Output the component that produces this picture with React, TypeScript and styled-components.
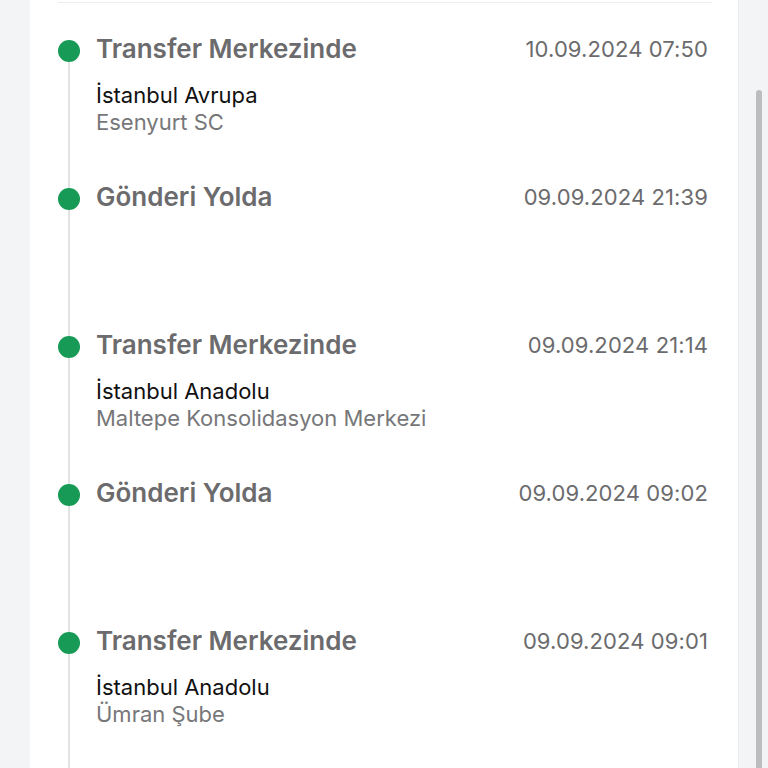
import React from "react";
import styled, { createGlobalStyle } from "styled-components";

const Global = createGlobalStyle`
  html, body { margin: 0; padding: 0; background: #f3f4f6; }
  body { font-family: Inter, "Noto Sans", "Liberation Sans", sans-serif; -webkit-font-smoothing: antialiased; }
  * { box-sizing: border-box; }
`;

const Page = styled.div`
  display: grid;
  grid-template-columns: 30px 708px 30px;
  height: 768px;
  overflow: hidden;
`;

const Gutter = styled.div`
  background: #f3f4f6;
`;

const ScrollTrack = styled.div`
  background: #f3f4f6;
  border-left: 1px solid #ececee;
  display: flex;
  flex-direction: column;
  padding: 90px 6px 0 17px;
`;

const ScrollThumb = styled.div`
  flex: 1;
  width: 6px;
  background: #bdbdbd;
  border-radius: 3px 3px 0 0;
`;

const Card = styled.div`
  background: #ffffff;
  padding: 2px 30px 0 28px;
  display: flex;
  flex-direction: column;
`;

const Divider = styled.div`
  height: 1px;
  background: #eeeeef;
  margin-right: -4px;
`;

const Timeline = styled.ul`
  list-style: none;
  margin: 0;
  padding: 0;
`;

const Item = styled.li<{ $first?: boolean }>`
  display: grid;
  grid-template-columns: 22px 1fr;
  column-gap: 16px;
  align-items: start;
  height: 148px;
  position: relative;
  padding-top: 32px;

  &:last-child {
    height: 220px;
  }

  &::before {
    content: "";
    position: absolute;
    left: 10px;
    width: 2px;
    top: ${(p) => (p.$first ? "48px" : "0")};
    bottom: 0;
    background: #e2e2e4;
  }
`;

const Dot = styled.span`
  position: relative;
  z-index: 1;
  width: 22px;
  height: 22px;
  margin-top: 5px;
  border-radius: 50%;
  background: #179a55;
`;

const Body = styled.div`
  display: flex;
  flex-direction: column;
`;

const Head = styled.div`
  display: flex;
  justify-content: space-between;
  align-items: center;
  height: 28px;
`;

const Title = styled.span`
  font-size: 26px;
  font-weight: 600;
  color: #6b6b6d;
  line-height: 28px;
`;

const Time = styled.span`
  font-size: 22px;
  font-weight: 400;
  color: #6b6b6d;
  line-height: 28px;
  letter-spacing: 0.1px;
`;

const Place = styled.div`
  margin-top: 18px;
  font-size: 22px;
  color: #111111;
  line-height: 28px;
`;

const Detail = styled.div`
  font-size: 22px;
  color: #77777a;
  line-height: 27px;
`;

type Event = { title: string; time: string; place?: string; detail?: string };

const events: Event[] = [
  { title: "Transfer Merkezinde", time: "10.09.2024 07:50", place: "İstanbul Avrupa", detail: "Esenyurt SC" },
  { title: "Gönderi Yolda", time: "09.09.2024 21:39" },
  { title: "Transfer Merkezinde", time: "09.09.2024 21:14", place: "İstanbul Anadolu", detail: "Maltepe Konsolidasyon Merkezi" },
  { title: "Gönderi Yolda", time: "09.09.2024 09:02" },
  { title: "Transfer Merkezinde", time: "09.09.2024 09:01", place: "İstanbul Anadolu", detail: "Ümran Şube" },
];

export default function App() {
  return (
    <>
      <Global />
      <Page>
        <Gutter />
        <Card>
          <Divider />
          <Timeline>
            {events.map((e, i) => (
              <Item key={i} $first={i === 0}>
                <Dot />
                <Body>
                  <Head>
                    <Title>{e.title}</Title>
                    <Time>{e.time}</Time>
                  </Head>
                  {e.place && <Place>{e.place}</Place>}
                  {e.detail && <Detail>{e.detail}</Detail>}
                </Body>
              </Item>
            ))}
          </Timeline>
        </Card>
        <ScrollTrack>
          <ScrollThumb />
        </ScrollTrack>
      </Page>
    </>
  );
}
